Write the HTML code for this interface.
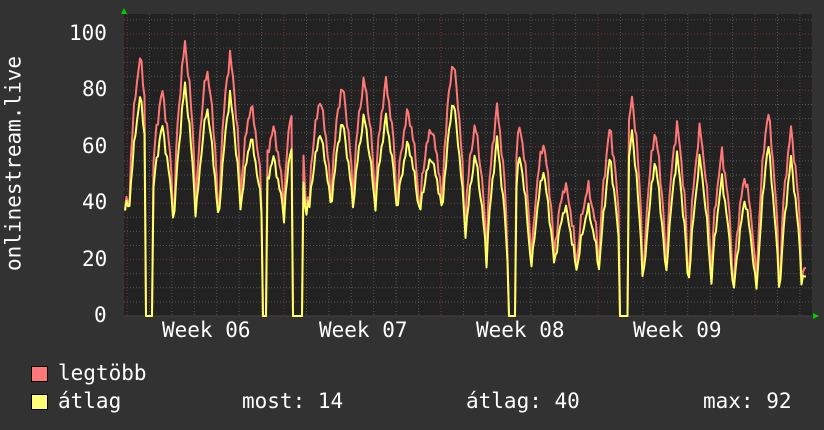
<!DOCTYPE html>
<html><head><meta charset="utf-8"><style>
html,body{margin:0;padding:0;background:#323232;}
body{width:824px;height:430px;overflow:hidden;position:relative;font-family:"DejaVu Sans Mono","Liberation Mono",monospace;color:#fff;}
.t{position:absolute;font-size:21px;line-height:21px;white-space:pre;}
.box{position:absolute;width:15px;height:14px;border:1px solid #000;}
</style></head><body>
<svg id="g" width="824" height="430" style="position:absolute;left:0;top:0">
<rect x="124" y="14" width="688" height="302" fill="#222"/>
<g id="grid"></g>
<polygon points="121,14 127,14 124,8" fill="#0c0"/>
<polygon points="813,313 813,319 819,316" fill="#0c0"/>
<path id="mx" fill="none" stroke="#f77" stroke-width="2" stroke-linejoin="round"/>
<path id="av" fill="none" stroke="#ff6" stroke-width="2" stroke-linejoin="round"/>
</svg>
<div class="t" style="left:69px;top:23px">100</div>
<div class="t" style="left:82px;top:79px">80</div>
<div class="t" style="left:82px;top:136px">60</div>
<div class="t" style="left:82px;top:192px">40</div>
<div class="t" style="left:82px;top:249px">20</div>
<div class="t" style="left:94px;top:305px">0</div>
<div class="t" style="left:-96px;top:153px;transform:rotate(-90deg);transform-origin:center;width:220px;text-align:center">onlinestream.live</div>
<div class="t" style="left:162px;top:320px">Week 06</div>
<div class="t" style="left:319px;top:320px">Week 07</div>
<div class="t" style="left:476px;top:320px">Week 08</div>
<div class="t" style="left:633px;top:320px">Week 09</div>
<div class="box" style="left:31px;top:366px;background:#f77"></div>
<div class="t" style="left:58px;top:363px">legtöbb</div>
<div class="box" style="left:31px;top:394px;background:#ff7"></div>
<div class="t" style="left:58px;top:391px">átlag</div>
<div class="t" style="left:242px;top:391px">most: 14</div>
<div class="t" style="left:466px;top:391px">átlag: 40</div>
<div class="t" style="left:703px;top:391px">max: 92</div>
<script>
var g=document.getElementById('grid'),s='';
function Y(v){return 316-v*2.82;}
for(var v=5;v<=105;v+=5){var y=Y(v);if(y<14)break;var maj=v%20==0;
s+='<line x1="124" x2="812" y1="'+y+'" y2="'+y+'" stroke="'+(maj?'#733':'#555')+'" stroke-dasharray="1,2"/>';}
for(var i=0;i<32;i++){var x=127+i*22.43;if(x>812)break;var maj=(i%7==0);
s+='<line y1="14" y2="316" x1="'+x+'" x2="'+x+'" stroke="'+(maj?'#733':'#555')+'" stroke-dasharray="1,2"/>';}
s+='<line x1="124" x2="812" y1="316" y2="316" stroke="#444"/>';
g.innerHTML=s;
var pk=[[140,92],[162,80],[185,97],[207,88],[230,93],[251,75],[273,67],[295,82],[320,77],[342,82],[364,84],[386,83],[408,73],[431,67],[453,91],[475,68],[497,74],[520,68],[543,62],[565,47],[588,46],[610,67],[632,78],[655,66],[677,68],[700,67],[722,58],[745,50],[768,73],[791,66]];
var tr=[40,38,37,37,38,38,36,38,40,40,40,40,39,39,38,24,20,19,20,18,18,17,16,16,16,15,13,11,13,14,14];
var drops=[[146,153],[263,266],[293,303],[509,516],[619,628]];
var M='',A='';
for(var x=125;x<=806;x+=1.5){
 var best=0,bd=1e9;for(var j=0;j<pk.length;j++){var dd=Math.abs(pk[j][0]-x);if(dd<bd){bd=dd;best=j;}}
 var p=pk[best][1],t=tr[best];
 var w=Math.max(0,1-bd/10.5);var sh=Math.pow(w,0.55);
 var jit=Math.sin(x*1.7)*1.5+Math.sin(x*0.9)*1.2;
 var mv=t+(p-t)*sh+jit;
 var av=t-1+(p*0.86-t)*Math.pow(w,0.75)+jit*0.8;
 for(var q=0;q<drops.length;q++)if(x>=drops[q][0]&&x<=drops[q][1]){av=0;mv=Math.min(mv,0);}
 if(x>804){mv=17;av=14;}
 M+=(M?'L':'M')+x.toFixed(1)+','+Y(Math.max(0,mv)).toFixed(1);
 A+=(A?'L':'M')+x.toFixed(1)+','+Y(Math.max(0,av)).toFixed(1);
}
document.getElementById('mx').setAttribute('d',M);
document.getElementById('av').setAttribute('d',A);
</script>
</body></html>
